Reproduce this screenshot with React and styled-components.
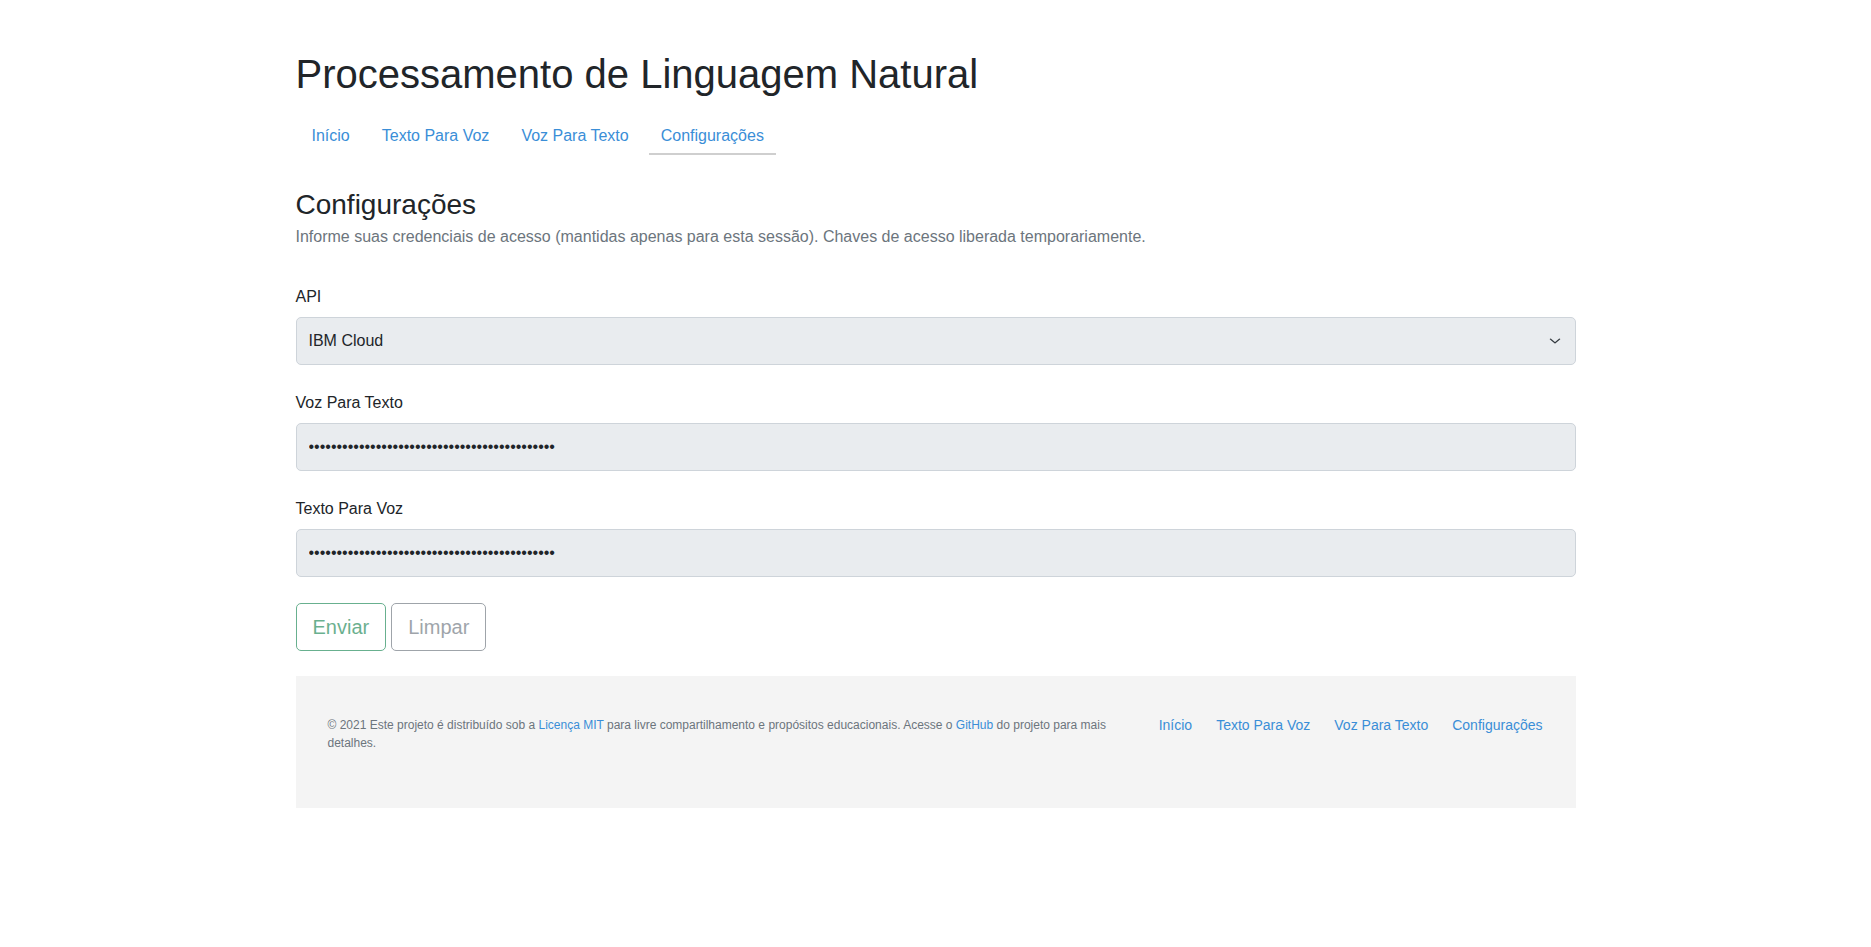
import styled, { createGlobalStyle } from "styled-components";

const GlobalStyle = createGlobalStyle`
  * {
    box-sizing: border-box;
  }
  body {
    margin: 0;
    background: #fff;
    color: #212529;
    font-family: "Liberation Sans", Arial, sans-serif;
    font-size: 16px;
    line-height: 1.5;
  }
`;

const navItems = ["Início", "Texto Para Voz", "Voz Para Texto", "Configurações"];
const secret = "•".repeat(44);

const App = () => {
  return (
    <Page>
      <GlobalStyle />
      <Title>Processamento de Linguagem Natural</Title>
      <Nav>
        {navItems.map((item) => (
          <NavLink key={item} href="#" active={item === "Configurações"}>
            {item}
          </NavLink>
        ))}
      </Nav>

      <Section>
        <SectionTitle>Configurações</SectionTitle>
        <Lead>
          Informe suas credenciais de acesso (mantidas apenas para esta sessão).
          Chaves de acesso liberada temporariamente.
        </Lead>

        <Form>
          <Field>
            <Label>API</Label>
            <SelectWrap>
              <Select defaultValue="ibm">
                <option value="ibm">IBM Cloud</option>
              </Select>
              <Chevron viewBox="0 0 16 16" preserveAspectRatio="none">
                <path
                  d="M2 5l6 6 6-6"
                  fill="none"
                  stroke="#343a40"
                  strokeWidth="2"
                  strokeLinecap="round"
                  strokeLinejoin="round"
                />
              </Chevron>
            </SelectWrap>
          </Field>
          <Field>
            <Label>Voz Para Texto</Label>
            <Input type="password" defaultValue={secret} readOnly />
          </Field>
          <Field>
            <Label>Texto Para Voz</Label>
            <Input type="password" defaultValue={secret} readOnly />
          </Field>
          <Buttons>
            <Button color="#198754">Enviar</Button>
            <Button color="#6c757d">Limpar</Button>
          </Buttons>
        </Form>
      </Section>

      <Footer>
        <FooterText>
          © 2021 Este projeto é distribuído sob a <FooterA href="#">Licença MIT</FooterA>{" "}
          para livre compartilhamento e propósitos educacionais. Acesse o{" "}
          <FooterA href="#">GitHub</FooterA> do projeto para mais detalhes.
        </FooterText>
        <FooterNav>
          {navItems.map((item) => (
            <FooterLink key={item} href="#">
              {item}
            </FooterLink>
          ))}
        </FooterNav>
      </Footer>
    </Page>
  );
};

const Page = styled.div`
  width: 1280px;
  margin: 0 auto;
  padding: 50px 0 60px;
`;

const Title = styled.h1`
  margin: 0 0 18px;
  font-size: 40px;
  font-weight: 400;
  line-height: 1.2;
  color: #212529;
`;

const Nav = styled.nav`
  display: flex;
`;

const NavLink = styled.a`
  display: block;
  margin: 0 4px;
  padding: 8px 12px 5px;
  color: #3a8ed7;
  text-decoration: none;
  line-height: 24px;
  border-bottom: 2px solid ${(props) => (props.active ? "#cfcfcf" : "transparent")};
`;

const Section = styled.section`
  padding-top: 33px;
`;

const SectionTitle = styled.h3`
  margin: 0 0 3px;
  font-size: 28px;
  font-weight: 400;
  line-height: 1.2;
  color: #212529;
`;

const Lead = styled.p`
  margin: 0 0 36px;
  color: #6c757d;
`;

const Form = styled.form`
  display: flex;
  flex-direction: column;
  gap: 26px;
`;

const Field = styled.div`
  display: flex;
  flex-direction: column;
  gap: 8px;
`;

const Label = styled.label`
  line-height: 24px;
  color: #212529;
`;

const controlStyles = `
  width: 100%;
  height: 48px;
  padding: 11px 12px;
  font-family: "Liberation Sans", Arial, sans-serif;
  font-size: 16px;
  line-height: 24px;
  color: #212529;
  background: #e9ecef;
  border: 1px solid #ced4da;
  border-radius: 5px;
  outline: none;
`;

const SelectWrap = styled.div`
  position: relative;
`;

const Select = styled.select`
  ${controlStyles}
  appearance: none;
  padding-right: 40px;
`;

const Chevron = styled.svg`
  position: absolute;
  right: 15px;
  top: 19px;
  width: 12px;
  height: 10px;
  pointer-events: none;
`;

const Input = styled.input`
  ${controlStyles}
  letter-spacing: 0;
`;

const Buttons = styled.div`
  display: flex;
  gap: 5px;
`;

const Button = styled.button`
  height: 48px;
  padding: 8px 16px;
  font-family: "Liberation Sans", Arial, sans-serif;
  font-size: 20px;
  line-height: 30px;
  color: ${(props) => props.color};
  background: transparent;
  border: 1px solid ${(props) => props.color};
  border-radius: 5px;
  opacity: 0.65;
`;

const Footer = styled.footer`
  display: flex;
  align-items: flex-start;
  margin-top: 25px;
  padding: 40px 33px 40px 32px;
  background: #f4f4f4;
`;

const FooterText = styled.p`
  width: 800px;
  margin: 0 0 16px;
  font-size: 12px;
  line-height: 18px;
  color: #6c757d;
`;

const FooterA = styled.a`
  color: #3a8ed7;
  text-decoration: none;
`;

const FooterNav = styled.nav`
  display: flex;
  justify-content: flex-end;
  gap: 24px;
  margin-left: auto;
`;

const FooterLink = styled.a`
  font-size: 14px;
  line-height: 18px;
  color: #3a8ed7;
  text-decoration: none;
`;

export default App;
